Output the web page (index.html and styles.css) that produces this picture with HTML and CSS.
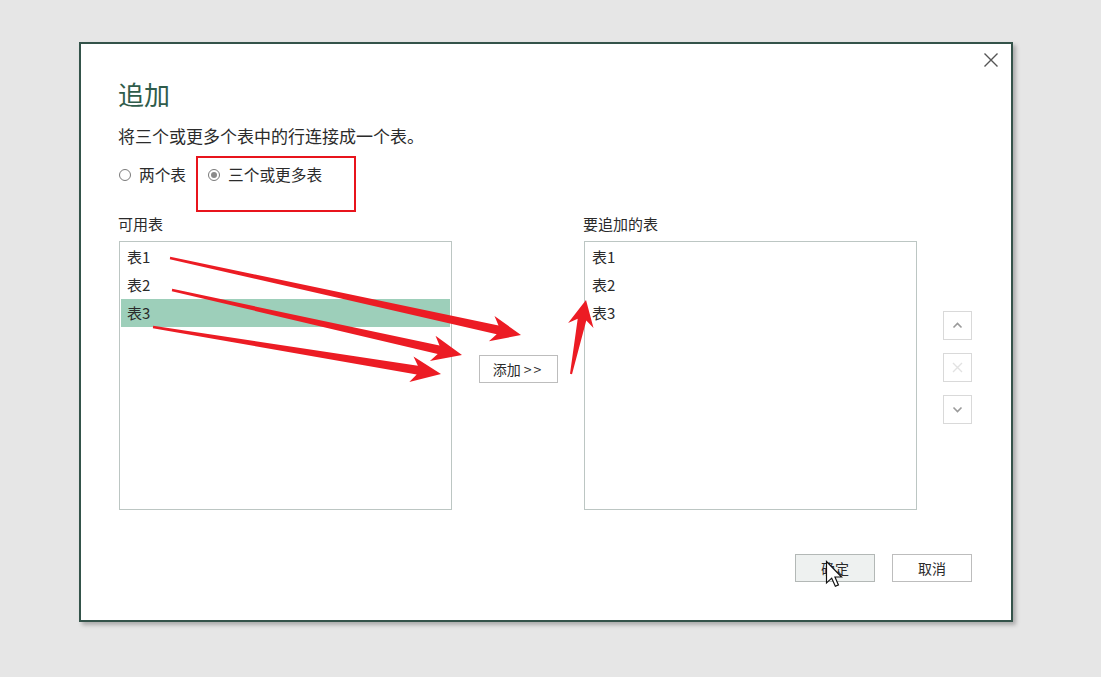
FILE: index.html
```html
<!DOCTYPE html>
<html lang="zh-CN">
<head>
<meta charset="utf-8">
<title>追加</title>
<link rel="stylesheet" href="styles.css">
</head>
<body>
<div class="dialog">
  <div class="topbar">
    <button class="close" aria-label="关闭">
      <svg width="16" height="16" viewBox="0 0 16 16"><path d="M1.5 1.5 L14.5 14.5 M14.5 1.5 L1.5 14.5" stroke="#555" stroke-width="1.4" fill="none"/></svg>
    </button>
  </div>
  <h1 class="title">追加</h1>
  <p class="desc">将三个或更多个表中的行连接成一个表。</p>
  <div class="radios">
    <label class="radio"><span class="dot"></span>两个表</label>
    <label class="radio checked"><span class="dot"></span>三个或更多表</label>
  </div>
  <div class="redbox"></div>

  <div class="grid">
    <div class="label">可用表</div>
    <div></div>
    <div class="label">要追加的表</div>
    <div></div>

    <div class="list">
      <div class="item">表1</div>
      <div class="item">表2</div>
      <div class="item selected">表3</div>
    </div>
    <div class="middle">
      <button class="btn add">添加 <span class="gt">&gt;&gt;</span></button>
    </div>
    <div class="list">
      <div class="item">表1</div>
      <div class="item">表2</div>
      <div class="item">表3</div>
    </div>
    <div class="side">
      <button class="sbtn"><svg width="13" height="13" viewBox="0 0 13 13"><path d="M2.5 8.5 L6.5 4.5 L10.5 8.5" stroke="#9a9a9a" stroke-width="1.6" fill="none"/></svg></button>
      <button class="sbtn"><svg width="13" height="13" viewBox="0 0 13 13"><path d="M2 2 L11 11 M11 2 L2 11" stroke="#e2e2e2" stroke-width="1.4" fill="none"/></svg></button>
      <button class="sbtn"><svg width="13" height="13" viewBox="0 0 13 13"><path d="M2.5 4.5 L6.5 8.5 L10.5 4.5" stroke="#9a9a9a" stroke-width="1.6" fill="none"/></svg></button>
    </div>
  </div>

  <div class="footer">
    <button class="btn ok">确定</button>
    <button class="btn">取消</button>
  </div>
</div>

<svg class="overlay" width="1101" height="677" viewBox="0 0 1101 677">
  <g fill="#ec1c24">
    <polygon points="170.2,256.8 498.5,325.6 494.5,315.9 521,335 488.9,341.3 496.7,334.2 169.8,259.2"/>
    <polygon points="172.2,288.8 439.5,345.5 435.5,335.7 462,355 429.9,361.1 437.7,354.1 171.8,291.2"/>
    <polygon points="153.2,325.8 417.9,365.8 413.5,356.4 441,374 409.3,382.0 416.7,374.4 152.8,328.2"/>
    <polygon points="572,374.2 586.3,320.4 593.5,328.1 586,300 568.1,322.9 577.7,318.8 570,373.8"/>
  </g>
  <g transform="translate(826.5,561.5) scale(1.3)">
    <path d="M0 0 L0 16.5 L4 12.8 L6.8 19 L9.2 18 L6.5 11.9 L11.6 11.9 Z" fill="#fff" stroke="#111" stroke-width="0.9" stroke-linejoin="miter"/>
  </g>
</svg>
</body>
</html>
```
FILE: styles.css
```css
* { box-sizing: border-box; }
html, body { margin: 0; padding: 0; }
body {
  background: #e6e6e6;
  width: 1101px;
  height: 677px;
  overflow: hidden;
  padding: 42px 0 0 79px;
  font-family: "Noto Sans CJK SC", "Microsoft YaHei", sans-serif;
  color: #2b2b2b;
}
.dialog {
  position: relative;
  width: 934px;
  height: 580px;
  background: #fff;
  border: 2px solid #34534a;
  box-shadow: 3px 3px 4px rgba(0,0,0,0.25);
  padding: 0 39px 0 38px;
}
.topbar {
  height: 32px;
  display: flex;
  justify-content: flex-end;
  align-items: center;
  margin-right: -39px;
}
.close {
  width: 32px;
  height: 32px;
  border: none;
  background: transparent;
  padding: 0;
  margin-right: 4px;
  display: flex;
  align-items: center;
  justify-content: center;
}
.title {
  margin: 0;
  font-size: 26px;
  font-weight: normal;
  line-height: 36px;
  color: #2f5c4b;
  margin-left: -1px;
}
.desc {
  margin: 12px 0 0 -1px;
  font-size: 17px;
  line-height: 24px;
}
.radios {
  margin-top: 15px;
  display: flex;
  gap: 22px;
  height: 24px;
  font-size: 15.7px;
  line-height: 24px;
}
.radio {
  display: flex;
  align-items: center;
  gap: 8px;
}
.dot {
  width: 12px;
  height: 12px;
  border-radius: 50%;
  border: 1px solid #7a7a7a;
  background: #fff;
  display: inline-block;
  position: relative;
}
.radio.checked .dot::after {
  content: "";
  position: absolute;
  left: 2px; top: 2px;
  width: 6px; height: 6px;
  border-radius: 50%;
  background: #8a8a8a;
}
.redbox {
  position: absolute;
  left: 115px;
  top: 112px;
  width: 160px;
  height: 56px;
  border: 2px solid #e8141c;
}
.grid {
  margin-top: 25px;
  display: grid;
  grid-template-columns: 333px 132px 333px 55px;
  grid-template-rows: 24px 269px;
  row-gap: 5px;
}
.label {
  font-size: 15px;
  line-height: 24px;
  margin-left: -1px;
}
.list {
  border: 1px solid #bcc6c3;
  padding: 1px;
}
.item {
  height: 28px;
  line-height: 28px;
  font-size: 15px;
  padding-left: 6px;
}
.item.selected {
  background: #9dcfba;
}
.middle {
  display: flex;
  justify-content: center;
  padding-top: 114px;
}
.btn {
  width: 80px;
  height: 28px;
  border: 1px solid #bdbdbd;
  background: #fff;
  font-family: inherit;
  font-size: 14px;
  color: #2b2b2b;
  padding: 0;
}
.add { width: 79px; }
.gt { letter-spacing: 2px; }
.side {
  display: flex;
  flex-direction: column;
  align-items: flex-end;
  padding-top: 70px;
  gap: 13px;
}
.sbtn {
  width: 29px;
  height: 29px;
  border: 1px solid #d9d9d9;
  background: #fff;
  padding: 0;
  display: flex;
  align-items: center;
  justify-content: center;
}
.footer {
  margin-top: 44px;
  display: flex;
  justify-content: flex-end;
  gap: 17px;
}
.btn.ok {
  background: #eef1f0;
  border-color: #b3b8b6;
}
.overlay {
  position: absolute;
  left: 0;
  top: 0;
  pointer-events: none;
}
```
